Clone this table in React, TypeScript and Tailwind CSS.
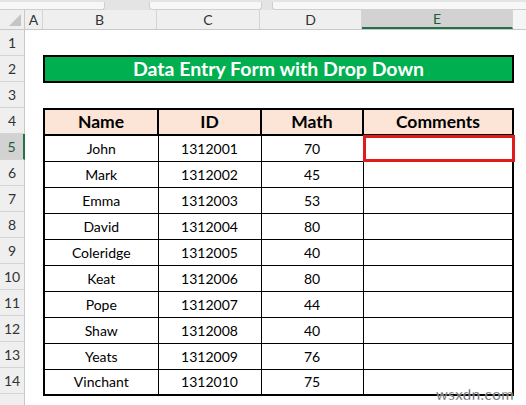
import React from 'react';

const rows = [
  { name: 'John', id: '1312001', math: '70' },
  { name: 'Mark', id: '1312002', math: '45' },
  { name: 'Emma', id: '1312003', math: '53' },
  { name: 'David', id: '1312004', math: '80' },
  { name: 'Coleridge', id: '1312005', math: '40' },
  { name: 'Keat', id: '1312006', math: '80' },
  { name: 'Pope', id: '1312007', math: '44' },
  { name: 'Shaw', id: '1312008', math: '40' },
  { name: 'Yeats', id: '1312009', math: '76' },
  { name: 'Vinchant', id: '1312010', math: '75' },
];

const cols = [
  { label: 'A', w: 'w-[18px]' },
  { label: 'B', w: 'w-[114px]' },
  { label: 'C', w: 'w-[103px]' },
  { label: 'D', w: 'w-[102px]' },
  { label: 'E', w: 'w-[151px]' },
];

function RowHead({ n, active }: { n: number; active?: boolean }) {
  return (
    <div
      className={`h-[26px] flex items-center justify-center border-b border-[#d4d4d4] text-[14px] ${
        active ? 'bg-[#d2d2d2] border-r-2 border-r-[#217346] text-[#1d5e3a]' : 'bg-[#efefef] border-r border-r-[#c8c8c8] text-[#333]'
      }`}
    >
      {n}
    </div>
  );
}

export default function App() {
  return (
    <div className="relative w-[526px] h-[405px] overflow-hidden bg-white" style={{ fontFamily: 'Lato, "Open Sans", sans-serif' }}>
      {/* strip left over from the ribbon */}
      <div className="h-[10px] bg-[#e4e4e4] flex items-end gap-[10px] pl-0">
        <div className="w-[105px] h-[8px] bg-[#f7f7f7] border-b border-r border-[#cfcfcf] rounded-br-[3px]" />
        <div className="w-[24px]" />
        <div className="w-[113px] h-[8px] bg-[#f7f7f7] border border-t-0 border-[#cfcfcf] rounded-b-[3px]" />
        <div className="flex-1 h-[8px] bg-[#f7f7f7] border-b border-l border-[#cfcfcf] rounded-bl-[3px]" />
      </div>

      {/* column headers */}
      <div className="flex h-[20px] bg-[#efefef] border-b border-[#c8c8c8]">
        <div className="w-[25px] shrink-0 border-r border-[#c8c8c8] flex items-end justify-end p-[3px]">
          <svg width="12" height="12" viewBox="0 0 12 12">
            <path d="M12 0 L12 12 L0 12 Z" fill="#c4c4c4" />
          </svg>
        </div>
        {cols.map((c) => (
          <div
            key={c.label}
            className={`${c.w} shrink-0 flex items-center justify-center text-[14px] border-r border-[#d4d4d4] ${
              c.label === 'E' ? 'bg-[#d2d2d2] border-b-2 border-b-[#217346] text-[#1d5e3a]' : 'text-[#333]'
            }`}
          >
            {c.label}
          </div>
        ))}
        <div className="flex-1 bg-[#f5f5f5]" />
      </div>

      <div className="flex">
        {/* row numbers */}
        <div className="w-[25px] shrink-0 flex flex-col">
          {Array.from({ length: 14 }, (_, i) => (
            <RowHead key={i} n={i + 1} active={i + 1 === 5} />
          ))}
          <div className="h-[26px] bg-[#efefef] border-r border-[#c8c8c8]" />
        </div>

        {/* sheet body */}
        <div className="flex flex-col pl-[18px] text-black">
          <div className="h-[25px]" />
          <div className="w-[471px] h-[28px] border-2 border-black bg-[#00b050] flex items-center justify-center text-white font-bold text-[19.5px]">
            Data Entry Form with Drop Down
          </div>
          <div className="h-[25px]" />

          <table className="border-collapse border-2 border-black table-fixed w-[471px]">
            <colgroup>
              <col className="w-[114px]" />
              <col className="w-[103px]" />
              <col className="w-[102px]" />
              <col className="w-[150px]" />
            </colgroup>
            <thead>
              <tr className="h-[26px] bg-[#fce4d6] border-b-2 border-black">
                {['Name', 'ID', 'Math', 'Comments'].map((h) => (
                  <th key={h} className="border-2 border-black font-bold text-[17.5px] p-0 leading-none">
                    {h}
                  </th>
                ))}
              </tr>
            </thead>
            <tbody>
              {rows.map((r, i) => (
                <tr key={r.id} className="h-[26px] text-[14px]">
                  <td className="border border-black text-center p-0">{r.name}</td>
                  <td className="border border-black text-center p-0">{r.id}</td>
                  <td className="border border-black text-center p-0">{r.math}</td>
                  <td className="border border-black p-0 relative">
                    {i === 0 && (
                      <div className="absolute left-[-1px] top-[-1px] right-[-3px] bottom-[-1px] border-[3px] border-[#e01b1b]" />
                    )}
                  </td>
                </tr>
              ))}
            </tbody>
          </table>
        </div>
      </div>

      <div
        className="absolute right-[12px] bottom-[3px] text-[15px] leading-none text-[#444] tracking-[0.5px]"
        style={{ WebkitTextStroke: '0.3px #fff' }}
      >
        wsxdn.com
      </div>
    </div>
  );
}
